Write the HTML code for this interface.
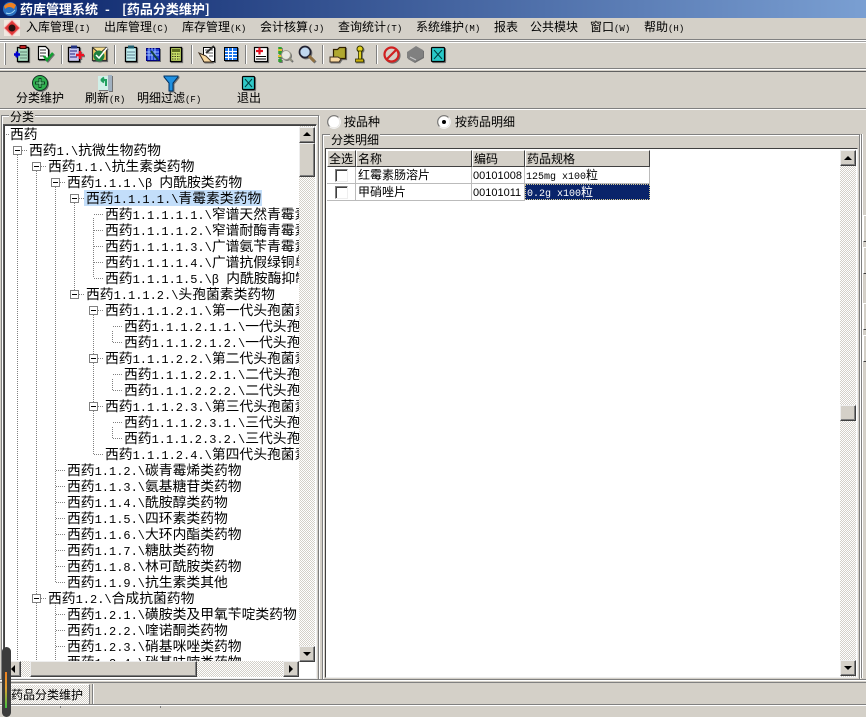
<!DOCTYPE html>
<html lang="zh"><head><meta charset="utf-8"><title>药库管理系统</title>
<style>
html,body{margin:0;padding:0;background:#d4d0c8}
body{width:866px;height:708px;position:relative;overflow:hidden;font:12px "WenQuanYi Zen Hei","Noto Sans CJK SC",sans-serif;color:#000}
div,span.a{position:absolute}
.title{left:0;top:0;width:866px;height:18px;background:linear-gradient(90deg,#0a246a,#7a9fd2)}
.title span{position:absolute;top:0;line-height:18px;color:#fff;font-weight:bold;font-size:13px;white-space:pre}
.hl{left:0;width:866px;height:1px;background:#808080}
.wl{left:0;width:866px;height:1px;background:#fff}
.m{top:18px;line-height:18px;white-space:nowrap;font-size:12px}
.m i,.lb i{font:normal 9px "Liberation Mono",monospace}
.lb{line-height:14px;white-space:nowrap;font-size:12px}
.sep{top:45px;width:1px;height:19px;background:#808080;border-right:1px solid #fff}
.t{position:absolute;white-space:nowrap;line-height:16px;height:16px;font-size:13.8px;margin-top:-1px}
.t i{font:normal 12px "Liberation Mono",monospace}
.sb{background:#d4d0c8;border:1px solid;border-color:#eee #404040 #404040 #eee;box-sizing:border-box;box-shadow:inset -1px -1px 0 #808080}
.track{background-color:#eeebe5;background-image:repeating-conic-gradient(#d4d0c8 0 25%,#fff 0 50%);background-size:2px 2px}
.h{top:150px;height:17px;background:#d4d0c8;box-sizing:border-box;border:1px solid;border-color:#fff #404040 #404040 #fff;line-height:15px;padding-left:1px;font-size:12px;white-space:nowrap}
.c{height:17px;box-sizing:border-box;border-right:1px solid #bbb;border-bottom:1px solid #bbb;line-height:16px;white-space:nowrap;padding-left:2px;background:#fff;overflow:hidden}
.c i{font:normal 10px "Liberation Mono",monospace}
.c b{font:normal 11px "Liberation Sans",sans-serif}
.cb{width:13px;height:13px;box-sizing:border-box;border:1px solid;border-color:#808080 #eee #eee #808080;background:#fff;box-shadow:inset 1px 1px 0 #404040}
.tri{width:0;height:0;border-style:solid;border-color:transparent}
</style></head><body>
<div class="title"><span style="left:20px">药库管理系统</span><span style="left:105px">-</span><span style="left:122px">[药品分类维护]</span></div>

<div class="m" style="left:26px">入库管理<i>(I)</i></div>
<div class="m" style="left:104px">出库管理<i>(C)</i></div>
<div class="m" style="left:182px">库存管理<i>(K)</i></div>
<div class="m" style="left:260px">会计核算<i>(J)</i></div>
<div class="m" style="left:338px">查询统计<i>(T)</i></div>
<div class="m" style="left:416px">系统维护<i>(M)</i></div>
<div class="m" style="left:494px">报表</div>
<div class="m" style="left:530px">公共模块</div>
<div class="m" style="left:590px">窗口<i>(W)</i></div>
<div class="m" style="left:644px">帮助<i>(H)</i></div>

<div class="hl" style="top:39px"></div><div class="wl" style="top:40px"></div><div class="hl" style="top:41px;background:#a0a0a0"></div><div class="wl" style="top:42px"></div>
<div class="hl" style="top:68px"></div><div class="wl" style="top:69px"></div><div class="hl" style="top:71px;background:#606060"></div>
<div class="hl" style="top:108px"></div><div class="wl" style="top:109px"></div>
<div style="left:4px;top:43px;width:1px;height:22px;background:#fff;border-right:1px solid #808080"></div>
<div class="sep" style="left:61px"></div><div class="sep" style="left:114px"></div><div class="sep" style="left:191px"></div><div class="sep" style="left:245px"></div><div class="sep" style="left:322px"></div><div class="sep" style="left:376px"></div>

<div class="lb" style="left:16px;top:91px">分类维护</div>
<div class="lb" style="left:85px;top:91px">刷新<i>(R)</i></div>
<div class="lb" style="left:137px;top:91px">明细过滤<i>(F)</i></div>
<div class="lb" style="left:237px;top:91px">退出</div>

<!-- left panel -->
<div style="left:1px;top:115px;width:316px;height:563px;border:1px solid #808080;box-shadow:inset 1px 1px 0 #fff,1px 1px 0 #fff"></div>
<div class="lb" style="left:9px;top:110px;background:#d4d0c8;padding:0 1px;line-height:13px">分类</div>
<div style="left:3px;top:124px;width:312px;height:553px;background:#fff;border:1px solid;border-color:#555 #eee #eee #555;box-shadow:inset 1px 1px 0 #404040"></div>

<div style="left:0;top:0;width:299px;height:661px;overflow:hidden">
<svg style="position:absolute;left:0;top:0" width="299" height="670" shape-rendering="crispEdges">
<g stroke="#808080" stroke-dasharray="1 1" fill="none">
<path d="M17.5 155V662M36.5 171V662M55.5 187V582M74.5 203V294M93.5 218V278M93.5 315V454M112.5 331V342M112.5 379V390M112.5 427V438M55.5 603V662"/>
<path d="M6 134.5H9M22 150.5H28M41 166.5H47M60 182.5H66M79 198.5H85M79 294.5H85M98 310.5H104M98 358.5H104M98 406.5H104M41 598.5H47"/>
<path d="M94 214.5H104M94 230.5H104M94 246.5H104M94 262.5H104M94 278.5H104M94 454.5H104M113 326.5H123M113 342.5H123M113 374.5H123M113 390.5H123M113 422.5H123M113 438.5H123"/>
<path d="M56 470.5H66M56 486.5H66M56 502.5H66M56 518.5H66M56 534.5H66M56 550.5H66M56 566.5H66M56 582.5H66M56 614.5H66M56 630.5H66M56 646.5H66M56 662.5H66"/>
</g>
<g fill="#fff" stroke="#808080">
<rect x="13.5" y="146.5" width="8" height="8"/><rect x="32.5" y="162.5" width="8" height="8"/><rect x="51.5" y="178.5" width="8" height="8"/><rect x="70.5" y="194.5" width="8" height="8"/><rect x="70.5" y="290.5" width="8" height="8"/><rect x="89.5" y="306.5" width="8" height="8"/><rect x="89.5" y="354.5" width="8" height="8"/><rect x="89.5" y="402.5" width="8" height="8"/><rect x="32.5" y="594.5" width="8" height="8"/>
</g>
<path stroke="#000" d="M15 150.5h5M34 166.5h5M53 182.5h5M72 198.5h5M72 294.5h5M91 310.5h5M91 358.5h5M91 406.5h5M34 598.5h5"/>
</svg>
<div style="left:84px;top:190px;width:178px;height:16px;background:#c3defa"></div>
<div class="t" style="left:10px;top:126px">西药</div>
<div class="t" style="left:29px;top:142px">西药<i>1.\</i>抗微生物药物</div>
<div class="t" style="left:48px;top:158px">西药<i>1.1.\</i>抗生素类药物</div>
<div class="t" style="left:67px;top:174px">西药<i>1.1.1.\β </i>内酰胺类药物</div>
<div class="t" style="left:86px;top:190px">西药<i>1.1.1.1.\</i>青霉素类药物</div>
<div class="t" style="left:105px;top:206px">西药<i>1.1.1.1.1.\</i>窄谱天然青霉素类</div>
<div class="t" style="left:105px;top:222px">西药<i>1.1.1.1.2.\</i>窄谱耐酶青霉素类</div>
<div class="t" style="left:105px;top:238px">西药<i>1.1.1.1.3.\</i>广谱氨苄青霉素类</div>
<div class="t" style="left:105px;top:254px">西药<i>1.1.1.1.4.\</i>广谱抗假绿铜单胞</div>
<div class="t" style="left:105px;top:270px">西药<i>1.1.1.1.5.\β </i>内酰胺酶抑制剂</div>
<div class="t" style="left:86px;top:286px">西药<i>1.1.1.2.\</i>头孢菌素类药物</div>
<div class="t" style="left:105px;top:302px">西药<i>1.1.1.2.1.\</i>第一代头孢菌素类</div>
<div class="t" style="left:124px;top:318px">西药<i>1.1.1.2.1.1.\</i>一代头孢</div>
<div class="t" style="left:124px;top:334px">西药<i>1.1.1.2.1.2.\</i>一代头孢</div>
<div class="t" style="left:105px;top:350px">西药<i>1.1.1.2.2.\</i>第二代头孢菌素类</div>
<div class="t" style="left:124px;top:366px">西药<i>1.1.1.2.2.1.\</i>二代头孢</div>
<div class="t" style="left:124px;top:382px">西药<i>1.1.1.2.2.2.\</i>二代头孢</div>
<div class="t" style="left:105px;top:398px">西药<i>1.1.1.2.3.\</i>第三代头孢菌素类</div>
<div class="t" style="left:124px;top:414px">西药<i>1.1.1.2.3.1.\</i>三代头孢</div>
<div class="t" style="left:124px;top:430px">西药<i>1.1.1.2.3.2.\</i>三代头孢</div>
<div class="t" style="left:105px;top:446px">西药<i>1.1.1.2.4.\</i>第四代头孢菌素类</div>
<div class="t" style="left:67px;top:462px">西药<i>1.1.2.\</i>碳青霉烯类药物</div>
<div class="t" style="left:67px;top:478px">西药<i>1.1.3.\</i>氨基糖苷类药物</div>
<div class="t" style="left:67px;top:494px">西药<i>1.1.4.\</i>酰胺醇类药物</div>
<div class="t" style="left:67px;top:510px">西药<i>1.1.5.\</i>四环素类药物</div>
<div class="t" style="left:67px;top:526px">西药<i>1.1.6.\</i>大环内酯类药物</div>
<div class="t" style="left:67px;top:542px">西药<i>1.1.7.\</i>糖肽类药物</div>
<div class="t" style="left:67px;top:558px">西药<i>1.1.8.\</i>林可酰胺类药物</div>
<div class="t" style="left:67px;top:574px">西药<i>1.1.9.\</i>抗生素类其他</div>
<div class="t" style="left:48px;top:590px">西药<i>1.2.\</i>合成抗菌药物</div>
<div class="t" style="left:67px;top:606px">西药<i>1.2.1.\</i>磺胺类及甲氧苄啶类药物</div>
<div class="t" style="left:67px;top:622px">西药<i>1.2.2.\</i>喹诺酮类药物</div>
<div class="t" style="left:67px;top:638px">西药<i>1.2.3.\</i>硝基咪唑类药物</div>
<div class="t" style="left:67px;top:654px">西药<i>1.2.4.\</i>硝基呋喃类药物</div>
</div>

<!-- tree scrollbars -->
<div class="track" style="left:299px;top:126px;width:16px;height:535px"></div>
<div class="sb" style="left:299px;top:127px;width:16px;height:16px"></div>
<div class="tri" style="left:303px;top:132px;border-width:0 4px 4px;border-bottom-color:#000"></div>
<div class="sb" style="left:299px;top:143px;width:16px;height:34px"></div>
<div class="sb" style="left:299px;top:646px;width:16px;height:16px"></div>
<div class="tri" style="left:303px;top:652px;border-width:4px 4px 0;border-top-color:#000"></div>
<div class="track" style="left:5px;top:661px;width:294px;height:16px"></div>
<div class="sb" style="left:5px;top:661px;width:16px;height:16px"></div>
<div class="tri" style="left:11px;top:665px;border-width:4px 4px 4px 0;border-right-color:#000"></div>
<div class="sb" style="left:30px;top:661px;width:167px;height:16px"></div>
<div class="sb" style="left:283px;top:661px;width:16px;height:16px"></div>
<div class="tri" style="left:289px;top:665px;border-width:4px 0 4px 4px;border-left-color:#000"></div>

<!-- splitter + right panel -->
<svg style="position:absolute;left:0;top:0" width="866" height="708">
<g fill="none">
<circle cx="334" cy="122" r="5.5" fill="#fff"/>
<path d="M329.500 126.500A6 6 0 0 1 338.500 117.500" stroke="#707070"/><path d="M338.500 117.500A6 6 0 0 1 329.500 126.500" stroke="#f4f4f4"/>
<circle cx="444" cy="122" r="5.5" fill="#fff"/>
<path d="M439.500 126.500A6 6 0 0 1 448.500 117.500" stroke="#707070"/><path d="M448.500 117.500A6 6 0 0 1 439.500 126.500" stroke="#f4f4f4"/>
</g>
<circle cx="444" cy="122" r="2" fill="#000"/>
</svg>
<div class="lb" style="left:344px;top:115px">按品种</div>
<div class="lb" style="left:455px;top:115px">按药品明细</div>

<div style="left:322px;top:134px;width:536px;height:544px;border:1px solid #808080;box-shadow:inset 1px 1px 0 #fff,1px 1px 0 #fff"></div>
<div class="lb" style="left:330px;top:133px;background:#d4d0c8;padding:0 1px;line-height:13px">分类明细</div>
<div style="left:325px;top:148px;width:531px;height:528px;background:#fff;border:1px solid;border-color:#404040 #eee #eee #404040"></div>

<div class="h" style="left:327px;width:29px">全选</div>
<div class="h" style="left:356px;width:116px">名称</div>
<div class="h" style="left:472px;width:53px">编码</div>
<div class="h" style="left:525px;width:125px">药品规格</div>
<div class="c" style="left:327px;top:167px;width:29px"></div>
<div class="c" style="left:356px;top:167px;width:116px">红霉素肠溶片</div>
<div class="c" style="left:472px;top:167px;width:53px;padding-left:1px"><b>00101008</b></div>
<div class="c" style="left:525px;top:167px;width:125px;padding-left:1px"><i>125mg x100</i>粒</div>
<div class="c" style="left:327px;top:184px;width:29px"></div>
<div class="c" style="left:356px;top:184px;width:116px">甲硝唑片</div>
<div class="c" style="left:472px;top:184px;width:53px;padding-left:1px"><b>00101011</b></div>
<div class="c" style="left:525px;top:184px;width:125px;height:16px;padding-left:1px;background:#0a246a;color:#fff;border:1px dotted #d4c890;line-height:14px"><i>0.2g x100</i>粒</div>
<div class="cb" style="left:335px;top:169px"></div>
<div class="cb" style="left:335px;top:186px"></div>

<div class="track" style="left:840px;top:150px;width:16px;height:527px"></div>
<div class="sb" style="left:840px;top:150px;width:16px;height:16px"></div>
<div class="tri" style="left:844px;top:156px;border-width:0 4px 4px;border-bottom-color:#000"></div>
<div class="sb" style="left:840px;top:405px;width:16px;height:16px"></div>
<div class="sb" style="left:840px;top:660px;width:16px;height:16px"></div>
<div class="tri" style="left:844px;top:666px;border-width:4px 4px 0;border-top-color:#000"></div>

<div style="left:861px;top:134px;width:1px;height:544px;background:#808080;border-right:1px solid #fff"></div>
<div style="left:863px;top:215px;width:3px;height:25px;border:1px solid;border-color:#fff transparent #404040 #fff"></div>
<div style="left:863px;top:247px;width:3px;height:25px;border:1px solid;border-color:#fff transparent #404040 #fff"></div>
<div style="left:863px;top:303px;width:3px;height:25px;border:1px solid;border-color:#fff transparent #404040 #fff"></div>
<div style="left:863px;top:335px;width:3px;height:25px;border:1px solid;border-color:#fff transparent #404040 #fff"></div>

<!-- bottom -->
<div class="hl" style="top:679px"></div><div class="wl" style="top:680px"></div><div class="hl" style="top:682px"></div>
<div style="left:8px;top:684px;width:78px;height:20px;border:1px solid;border-color:#fff #808080 #fff #fff;background-color:#e8e5e0;background-image:repeating-conic-gradient(#d4d0c8 0 25%,#fff 0 50%);background-size:2px 2px;line-height:20px;padding-left:2px;white-space:nowrap;box-sizing:content-box">药品分类维护</div>
<div style="left:92px;top:684px;width:1px;height:20px;background:#808080;border-right:1px solid #fff"></div>
<div class="hl" style="top:704px"></div><div class="wl" style="top:705px"></div>
<div style="left:60px;top:706px;width:1px;height:2px;background:#808080"></div><div style="left:160px;top:706px;width:1px;height:2px;background:#808080"></div>
<div style="left:2px;top:647px;width:9px;height:70px;border-radius:5px;background:#3c3c3c"></div>
<div style="left:5px;top:672px;width:2px;height:36px;background:linear-gradient(#f08020 0,#e0a030 45%,#40c040 100%)"></div>

<!-- window + menu icons -->
<svg style="position:absolute;left:0;top:0" width="30" height="40">
<circle cx="10" cy="9" r="7" fill="#2a70c0"/><path d="M4 6Q10 0 16 5L14 9Q9 5 5 9Z" fill="#f08020"/><path d="M6 13Q11 15 15 10" stroke="#a0d8f8" fill="none"/>
<rect x="4" y="20" width="16" height="16" fill="#f0e8e0"/>
<path d="M4 28L12 20L20 28L12 36Z" fill="#e03838" stroke="#f8b0b0"/><circle cx="12" cy="28" r="3.500" fill="#281010"/>
</svg>
<!-- toolbar icons -->
<svg style="position:absolute;left:0;top:0;filter:drop-shadow(1px 1px 0 #707070)" width="866" height="110">
<!-- 1 -->
<rect x="17.500" y="47.500" width="11" height="14" fill="#a8dcc0" stroke="#000" stroke-width="1.300"/><rect x="20" y="45.500" width="6" height="3" fill="#c02020" stroke="#300"/><path d="M20 52h7M20 55h7M20 58h7" stroke="#608070"/>
<path d="M14 54.500h6M17 51.500v6" stroke="#0000d0" stroke-width="2.500"/>
<!-- 2 -->
<path d="M38.500 46.500h7l3 3v10h-10z" fill="#fff" stroke="#000" stroke-width="1.200"/><path d="M40 50h6M40 53h6M40 56h4" stroke="#303030"/><path d="M44 56l3 4 6-7" stroke="#10a030" stroke-width="2.500" fill="none"/>
<!-- 3 -->
<rect x="68.500" y="47.500" width="11" height="14" fill="#c8c8f0" stroke="#000" stroke-width="1.300"/><rect x="71" y="45.500" width="6" height="3" fill="#203080"/><path d="M70 51h7M70 54h5M70 57h7" stroke="#202080"/><path d="M76 55h8M80 51v8" stroke="#f01020" stroke-width="2.500"/>
<!-- 4 -->
<path d="M92.500 47.500h14v13h-14z" fill="#f0c860" stroke="#303030" stroke-width="1.200"/><path d="M92.500 47.500l7 6 7-6" fill="#f8e090" stroke="#303030"/><circle cx="99" cy="56" r="5.500" fill="#208040"/><path d="M96 55l3 3 8-10" stroke="#fff" stroke-width="1.500" fill="none"/>
<!-- 5 -->
<rect x="125.500" y="47.500" width="11" height="14" fill="#c0f0f0" stroke="#000" stroke-width="1.300"/><rect x="128" y="45.500" width="6" height="3" fill="#206070"/><path d="M127 52h8M127 55h8M127 58h8" stroke="#608090"/>
<!-- 6 -->
<rect x="146.500" y="48.500" width="13" height="12" fill="#2040d0" stroke="#000080"/><path d="M149 48v12M152 48v12M155 48v12M146 52h13M146 55h13" stroke="#a0c0ff"/><path d="M151 51l7 9" stroke="#104040" stroke-width="2"/>
<!-- 7 -->
<rect x="170.500" y="47.500" width="11" height="14" fill="#c8e068" stroke="#000" stroke-width="1.300"/><rect x="172" y="49" width="8" height="3" fill="#607020"/><path d="M172 54h8M172 56.500h8M172 59h8" stroke="#404020" stroke-dasharray="1.500 1"/>
<!-- 8 -->
<rect x="203.500" y="47.500" width="11" height="14" fill="#fff" stroke="#000"/><path d="M205 50h8M207 53h6M209 56h4" stroke="#606060"/><path d="M199 53l7 3 6 6h-8z" fill="#f8d8a0" stroke="#403020"/><path d="M206 53l8-7" stroke="#303030" stroke-width="2"/>
<!-- 9 -->
<rect x="224.500" y="47.500" width="13" height="13" fill="#fff" stroke="#000"/><rect x="225" y="48" width="12" height="12" fill="#1e78f0"/><path d="M228.500 48v12M232.500 48v12M225 51.500h12M225 54.500h12M225 57.500h12" stroke="#fff"/>
<!-- 10 -->
<rect x="254.500" y="47.500" width="13" height="14" fill="#fff" stroke="#000" stroke-width="1.200"/><path d="M256 51h7M259.500 47.500v7" stroke="#e01020" stroke-width="2.200"/><path d="M256 56.500h10M256 59h10" stroke="#000"/>
<!-- 11 -->
<path d="M280 47v15" stroke="#30a030" stroke-width="3.500" stroke-dasharray="3 1"/><path d="M278 50h4M278 56h4" stroke="#e0c030" stroke-width="2"/><circle cx="286" cy="55" r="4.500" fill="#e8e8e0" stroke="#a0a090"/><path d="M289 58l3 3" stroke="#909080" stroke-width="2"/>
<!-- 12 -->
<circle cx="305" cy="52" r="5.500" fill="#c0d8f0" stroke="#202030" stroke-width="1.700"/><path d="M309 56l5.500 5.500" stroke="#907040" stroke-width="3"/>
<!-- 13 -->
<path d="M333.500 49.500h4l2-2h6v11h-12z" fill="#b0a830" stroke="#302000" stroke-width="1.200"/><path d="M330 57h8l3 2-2 3h-9z" fill="#f8d8a0" stroke="#403020"/>
<!-- 14 -->
<circle cx="360" cy="49" r="3" fill="#e0d020" stroke="#303000"/><rect x="358.500" y="51" width="3" height="10" fill="#e0d020" stroke="#303000" stroke-width=".8"/><rect x="355.500" y="59" width="8" height="3" fill="#c8b010" stroke="#303000" stroke-width=".8"/>
<!-- 15 -->
<circle cx="391.500" cy="54.500" r="7" fill="#d4d0c8" stroke="#d02020" stroke-width="2.200"/><path d="M387 59l9-9" stroke="#d02020" stroke-width="2.200"/>
<!-- 16 -->
<path d="M407 52l9-6 7 4v7l-9 5-7-4z" fill="#808080"/><path d="M410 57l6 3" stroke="#c8c8c8"/>
<!-- 17 -->
<rect x="431.500" y="47.500" width="13" height="14" rx="1" fill="#28c8c8" stroke="#000" stroke-width="1.200"/><path d="M434 50l8 9M442 50l-8 9" stroke="#004040"/>
<!-- second toolbar -->
<circle cx="40" cy="83" r="7.500" fill="#30b050" stroke="#103020"/><path d="M40 78v10M35 83h10" stroke="#0c4020" stroke-width="3"/><path d="M40 79v8M36 83h8" stroke="#80f0a0"/>
<path d="M98 76h13v14H98z" fill="#d0f0e8"/><path d="M108 75h4v16h-4z" fill="#a0b0c0"/><path d="M106 86v-6h-5M101 80l3-2.500M101 80l3 2.500" stroke="#20a060" stroke-width="2" fill="none"/>
<path d="M164 76h14v1l-5 6v8h-4v-8l-5-6z" fill="#2090e0" stroke="#003060"/>
<rect x="242.500" y="76.500" width="12" height="13" rx="1" fill="#30c8c8" stroke="#000" stroke-width="1.200"/><path d="M245 79l7 8M252 79l-7 8" stroke="#004040"/>
</svg>
</body></html>
